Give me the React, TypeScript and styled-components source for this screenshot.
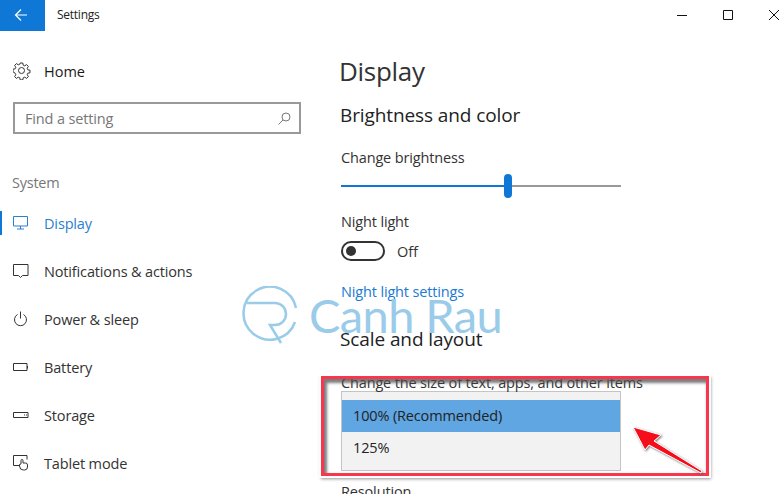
import React from 'react'
import styled, { createGlobalStyle } from 'styled-components'

const GlobalStyle = createGlobalStyle`
  html, body {
    margin: 0;
    padding: 0;
    background: #fff;
  }
  body {
    font-family: 'Open Sans', 'Liberation Sans', sans-serif;
    color: #222;
  }
`

const Win = styled.div`
  position: relative;
  width: 784px;
  height: 494px;
  overflow: hidden;
  background: #fff;
`

const TitleBar = styled.header`
  display: flex;
  align-items: center;
  height: 31px;
`

const BackButton = styled.div`
  width: 45px;
  height: 31px;
  background: #0f78d7;
  display: flex;
  align-items: center;
  justify-content: center;
  svg {
    margin-left: -3px;
    margin-top: -2px;
  }
`

const AppName = styled.span`
  margin-left: 12px;
  font-size: 12px;
  letter-spacing: -0.25px;
  color: #222;
  flex: 1;
  margin-top: -2px;
`

const WinButtons = styled.div`
  display: flex;
  gap: 36px;
  padding-right: 5px;
  svg {
    display: block;
    margin-top: -1px;
  }
`

const Body = styled.div`
  display: flex;
`

const Sidebar = styled.nav`
  width: 340px;
  flex: none;
`

const HomeRow = styled.div`
  display: flex;
  align-items: center;
  height: 48px;
  padding-left: 13px;
  margin-top: 16px;
  font-size: 14.500px;
  color: #1a1a1a;
`

const IconSlot = styled.span`
  width: 31px;
  flex: none;
  display: flex;
  align-items: center;
  svg {
    display: block;
  }
`

const SearchBox = styled.div`
  box-sizing: border-box;
  width: 288px;
  height: 32px;
  margin: 7px 0 0 13px;
  border: 2px solid #999;
  display: flex;
  align-items: center;
  justify-content: space-between;
  padding: 0 8px 0 10px;
  font-size: 14.500px;
  letter-spacing: -0.15px;
  color: #777;
`

const GroupLabel = styled.div`
  margin: 37px 0 0 12px;
  height: 24px;
  line-height: 24px;
  font-size: 14.500px;
  color: #777;
  letter-spacing: -0.25px;
`

const NavList = styled.div`
  margin-top: 4px;
`

const NavItem = styled.div<{ $active?: boolean }>`
  position: relative;
  display: flex;
  align-items: center;
  height: 48px;
  padding-left: 13px;
  font-size: 14.500px;
  letter-spacing: -0.15px;
  color: ${p => (p.$active ? '#2a7fd0' : '#333')};
  ${p =>
    p.$active &&
    `&::before {
      content: '';
      position: absolute;
      left: 0;
      top: 12px;
      width: 2px;
      height: 24px;
      background: #0f78d7;
    }`}
`

const Main = styled.main`
  flex: 1;
  min-width: 0;
`

const PageTitle = styled.h1`
  margin: 19px 0 0 -1px;
  height: 42px;
  line-height: 42px;
  font-size: 26px;
  font-weight: 400;
  letter-spacing: -0.3px;
  color: #333;
`

const SectionTitle = styled.h2<{ $top: number }>`
  margin: ${p => p.$top}px 0 0;
  height: 28px;
  line-height: 28px;
  font-size: 19px;
  font-weight: 400;
  letter-spacing: -0.1px;
  color: #222;
`

const Label = styled.div<{ $top: number }>`
  margin: ${p => p.$top}px 0 0 1px;
  height: 20px;
  line-height: 20px;
  font-size: 14.500px;
  letter-spacing: -0.15px;
  color: #333;
  white-space: nowrap;
`

const Slider = styled.div`
  position: relative;
  width: 280px;
  height: 2px;
  margin: 17px 0 0 1px;
  background: #999;
`

const SliderFill = styled.div`
  height: 2px;
  background: #0f78d7;
`

const SliderThumb = styled.div`
  position: absolute;
  top: -11px;
  width: 8px;
  height: 24px;
  border-radius: 4px;
  background: #0f78d7;
  transform: translateX(-4px);
`

const ToggleRow = styled.div`
  display: flex;
  align-items: center;
  gap: 12px;
  margin: 9px 0 0 1px;
  font-size: 14.500px;
  color: #333;
`

const Toggle = styled.div`
  box-sizing: border-box;
  width: 44px;
  height: 20px;
  border: 2px solid #333;
  border-radius: 10px;
  display: flex;
  align-items: center;
  padding-left: 3px;
  &::before {
    content: '';
    width: 10px;
    height: 10px;
    border-radius: 50%;
    background: #333;
  }
`

const LinkText = styled.div`
  margin: 21px 0 0 1px;
  height: 20px;
  line-height: 20px;
  font-size: 14.500px;
  letter-spacing: -0.15px;
  color: #1a7ad4;
`

const Dropdown = styled.div`
  box-sizing: border-box;
  width: 280px;
  height: 80px;
  margin: -2px 0 0 1px;
  padding: 8px 0;
  background: #f2f2f2;
  border: 1px solid #c4c4c4;
`

const Option = styled.div<{ $selected?: boolean }>`
  height: 32px;
  line-height: 31px;
  padding-left: 11px;
  font-size: 14.500px;
  letter-spacing: -0.15px;
  color: #222;
  background: ${p => (p.$selected ? '#5fa6e2' : 'transparent')};
`

const Watermark = styled.div`
  position: absolute;
  left: 242px;
  top: 286px;
  display: flex;
  align-items: center;
  gap: 11px;
  pointer-events: none;
  color: #9accea;
  font-family: 'Lato', 'Liberation Sans', sans-serif;
  font-size: 47px;
  font-weight: 400;
  letter-spacing: -0.6px;
  line-height: 58px;
  white-space: nowrap;
  svg {
    display: block;
  }
`

const Callout = styled.div`
  position: absolute;
  left: 321px;
  top: 376px;
  width: 388px;
  height: 100px;
  box-sizing: border-box;
  border: 3px solid #f8364d;
  box-shadow: 1px 2px 3px 1px rgba(90, 90, 90, 0.65), inset 2px 3px 3px 1px rgba(80, 80, 80, 0.75);
  outline: 2px solid #fff;
  pointer-events: none;
`

const Arrow = styled.svg`
  position: absolute;
  left: 628px;
  top: 420px;
  pointer-events: none;
`

const GearIcon = () => (
  <svg width="18" height="18" viewBox="0 0 18 18" fill="none" stroke="#333" strokeWidth="1">
    <circle cx="8.5" cy="8.5" r="3" />
    <path d="M7.2 1h2.6l.4 2.2 1.5.6 1.9-1.2 1.800 1.8-1.2 1.9.6 1.5 2.200.4v2.600l-2.200.4-.6 1.500 1.200 1.900-1.800 1.800-1.900-1.200-1.500.6-.4 2.100H7.200l-.4-2.100-1.500-.6-1.900 1.200-1.800-1.800 1.200-1.900-.6-1.500L0 9.800V7.200l2.200-.4.6-1.500-1.200-1.900 1.800-1.800 1.900 1.200 1.500-.6z" />
  </svg>
)

const SearchIcon = () => (
  <svg width="13" height="13" viewBox="0 0 13 13" fill="none" stroke="#777" strokeWidth="1">
    <circle cx="8" cy="5" r="4" />
    <path d="M5 8l-4.500 4.500" />
  </svg>
)

const MonitorIcon = () => (
  <svg width="16" height="14" viewBox="0 0 16 14" fill="none" stroke="#2a7fd0" strokeWidth="1">
    <path d="M.5.500h14v9.500H.5zM7.500 10v3M4 13h7" />
  </svg>
)

const BubbleIcon = () => (
  <svg width="16" height="16" viewBox="0 0 16 16" fill="none" stroke="#333" strokeWidth="1">
    <path d="M.5 1.500h14.500v11h-5.500l-2 2-2-2H.5z" />
  </svg>
)

const PowerIcon = () => (
  <svg width="15" height="16" viewBox="0 0 15 16" fill="none" stroke="#333" strokeWidth="1">
    <path d="M4.500 3.500a6 6 0 1 0 6 0M7.500.500v7" />
  </svg>
)

const BatteryIcon = () => (
  <svg width="16" height="9" viewBox="0 0 16 9" fill="none" stroke="#333" strokeWidth="1">
    <path d="M.5.500h13.500v7H.5zM14.500 3v2.500" />
  </svg>
)

const DriveIcon = () => (
  <svg width="16" height="7" viewBox="0 0 16 7" fill="none" stroke="#333" strokeWidth="1">
    <path d="M.5.500h14.500v5H.5zM11 3h1M13 3h1" />
  </svg>
)

const TabletIcon = () => (
  <svg width="16" height="16" viewBox="0 0 16 16" fill="none" stroke="#333" strokeWidth="1">
    <path d="M6 10.500H.5v-10h13.500v4" />
    <path d="M8 9V5.500a1 1 0 0 1 2 0V8h2.500a2 2 0 0 1 2 2v2a3 3 0 0 1-3 3h-1a4 4 0 0 1-4-4V9.500z" />
  </svg>
)

const navItems = [
  { label: 'Display', icon: <MonitorIcon />, active: true },
  { label: 'Notifications & actions', icon: <BubbleIcon /> },
  { label: 'Power & sleep', icon: <PowerIcon /> },
  { label: 'Battery', icon: <BatteryIcon /> },
  { label: 'Storage', icon: <DriveIcon /> },
  { label: 'Tablet mode', icon: <TabletIcon /> },
]

export default function App() {
  return (
    <Win>
      <GlobalStyle />
      <TitleBar>
        <BackButton>
          <svg width="14" height="14" viewBox="0 0 14 14" fill="none" stroke="#fff" strokeWidth="1.2">
            <path d="M13 7H1.500M7 1.500 1.500 7 7 12.500" />
          </svg>
        </BackButton>
        <AppName>Settings</AppName>
        <WinButtons>
          <svg width="10" height="10" viewBox="0 0 10 10" stroke="#111" fill="none">
            <path d="M0 5.500h10" />
          </svg>
          <svg width="10" height="10" viewBox="0 0 10 10" stroke="#111" fill="none">
            <path d="M.5.500h9v9h-9z" />
          </svg>
          <svg width="10" height="10" viewBox="0 0 10 10" stroke="#111" fill="none">
            <path d="M0 0l10 10M10 0 0 10" />
          </svg>
        </WinButtons>
      </TitleBar>
      <Body>
        <Sidebar>
          <HomeRow>
            <IconSlot>
              <GearIcon />
            </IconSlot>
            Home
          </HomeRow>
          <SearchBox>
            Find a setting
            <SearchIcon />
          </SearchBox>
          <GroupLabel>System</GroupLabel>
          <NavList>
            {navItems.map(item => (
              <NavItem key={item.label} $active={item.active}>
                <IconSlot>{item.icon}</IconSlot>
                {item.label}
              </NavItem>
            ))}
          </NavList>
        </Sidebar>
        <Main>
          <PageTitle>Display</PageTitle>
          <SectionTitle $top={9}>Brightness and color</SectionTitle>
          <Label $top={19}>Change brightness</Label>
          <Slider>
            <SliderFill style={{ width: `${(167 / 280) * 100}%` }} />
            <SliderThumb style={{ left: `${(167 / 280) * 100}%` }} />
          </Slider>
          <Label $top={25}>Night light</Label>
          <ToggleRow>
            <Toggle />
            Off
          </ToggleRow>
          <LinkText>Night light settings</LinkText>
          <SectionTitle $top={23}>Scale and layout</SectionTitle>
          <Label $top={20}>Change the size of text, apps, and other items</Label>
          <Dropdown>
            <Option $selected>100% (Recommended)</Option>
            <Option>125%</Option>
          </Dropdown>
          <Label $top={11}>Resolution</Label>
        </Main>
      </Body>
      <Watermark>
        <svg width="56" height="58" viewBox="0 0 56 58" fill="none" stroke="#9accea" strokeWidth="2.500">
          <path d="M54 22A26.500 26.500 0 1 0 53 36" />
          <path d="M5 17h28a11 11 0 0 1 0 22H28l11 18" />
        </svg>
        <span>Canh Rau</span>
      </Watermark>
      <Callout />
      <Arrow width="80" height="60" viewBox="0 0 80 60">
        <defs>
          <filter id="arrowShadow" x="-20%" y="-20%" width="140%" height="140%">
            <feDropShadow dx="1" dy="1" stdDeviation="1" floodColor="#555" floodOpacity="0.8" />
          </filter>
        </defs>
        <g filter="url(#arrowShadow)">
          <path d="M5 7 33 15 26 21 74 51 73 53 21 25 17 30z" fill="#f5101f" stroke="#fff" strokeWidth="1" />
        </g>
      </Arrow>
    </Win>
  )
}
